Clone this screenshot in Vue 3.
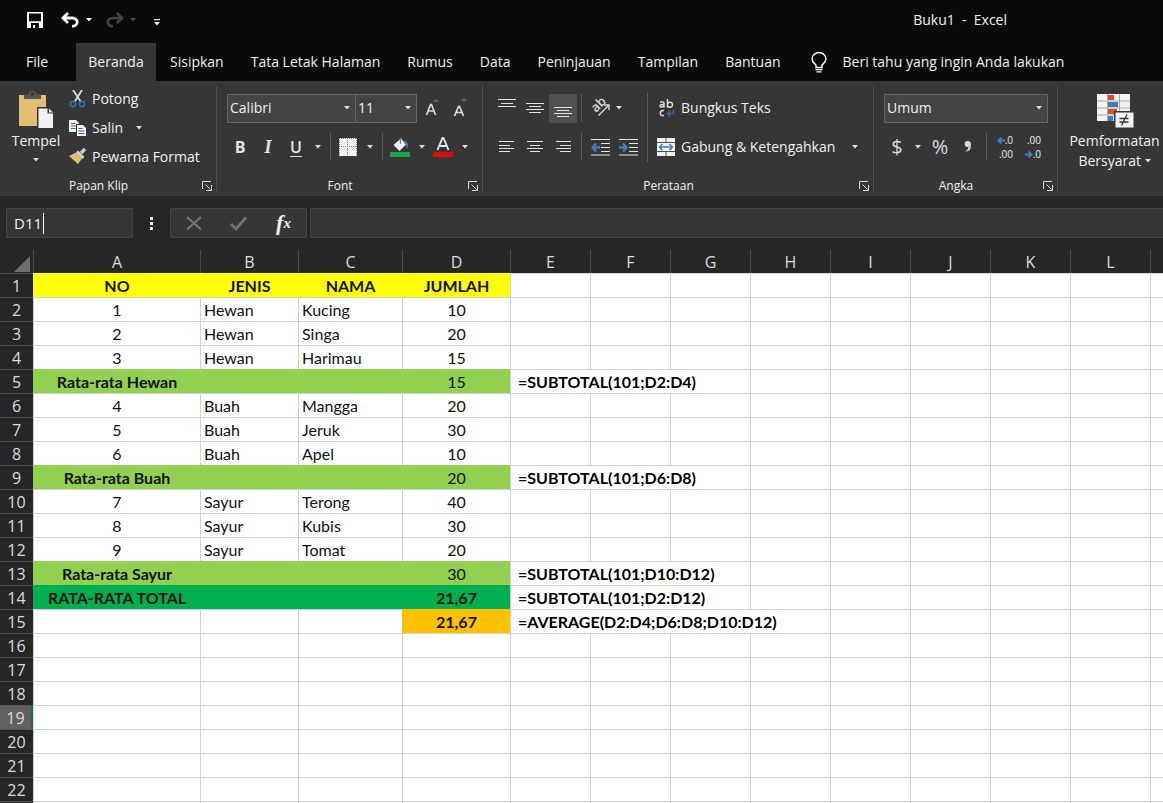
<script setup>
import { ref } from 'vue'

const nameBox = ref('D11')
const formula = ref('')
const fontName = ref('Calibri')
const fontSize = ref('11')
const numberFormat = ref('Umum')

const tabs = ['File', 'Beranda', 'Sisipkan', 'Tata Letak Halaman', 'Rumus', 'Data', 'Peninjauan', 'Tampilan', 'Bantuan']
const activeTab = ref('Beranda')

const columns = ['A', 'B', 'C', 'D', 'E', 'F', 'G', 'H', 'I', 'J', 'K', 'L', '']

const item = (no, jenis, nama, jumlah) => [
  { t: no, c: 'mid' },
  { t: jenis },
  { t: nama },
  { t: jumlah, c: 'mid' }
]
const total = (label, value, note, fill, extra = '') => [
  { t: label, c: `mid bold ${fill}` },
  { t: '', c: fill },
  { t: '', c: fill },
  { t: value, c: `mid ${fill} ${extra}` },
  { t: note, c: 'bold note', span: 3 }
]

const data = [
  ['NO', 'JENIS', 'NAMA', 'JUMLAH'].map((t) => ({ t, c: 'mid bold yellow' })),
  item('1', 'Hewan', 'Kucing', '10'),
  item('2', 'Hewan', 'Singa', '20'),
  item('3', 'Hewan', 'Harimau', '15'),
  total('Rata-rata Hewan', '15', '=SUBTOTAL(101;D2:D4)', 'lime'),
  item('4', 'Buah', 'Mangga', '20'),
  item('5', 'Buah', 'Jeruk', '30'),
  item('6', 'Buah', 'Apel', '10'),
  total('Rata-rata Buah', '20', '=SUBTOTAL(101;D6:D8)', 'lime'),
  item('7', 'Sayur', 'Terong', '40'),
  item('8', 'Sayur', 'Kubis', '30'),
  item('9', 'Sayur', 'Tomat', '20'),
  total('Rata-rata Sayur', '30', '=SUBTOTAL(101;D10:D12)', 'lime'),
  total('RATA-RATA TOTAL', '21,67', '=SUBTOTAL(101;D2:D12)', 'green', 'bold'),
  [
    { t: '' },
    { t: '' },
    { t: '' },
    { t: '21,67', c: 'mid bold orange' },
    { t: '=AVERAGE(D2:D4;D6:D8;D10:D12)', c: 'bold note', span: 4 }
  ]
]

const rows = Array.from({ length: 23 }, (_, i) => {
  const cells = [...(data[i] || [])]
  let used = cells.reduce((n, c) => n + (c.span || 1), 0)
  while (used < columns.length) {
    cells.push({ t: '' })
    used++
  }
  return { n: i + 1, label: i < 22 ? i + 1 : '', cells }
})
</script>

<template>
  <div class="app">
    <header class="titlebar">
      <div class="quick">
        <button class="q-save" aria-label="Simpan">
          <svg width="16" height="16" viewBox="0 0 16 16"><path d="M0 0h16v16H0zM2 1.6v7.6h12V1.6zM4 11v5h2v-3h2v3h4v-5z" fill="#fff" fill-rule="evenodd" /></svg>
        </button>
        <button class="q-undo" aria-label="Urungkan">
          <svg width="19" height="16" viewBox="0 0 19 16"><path d="M7 1 2 6l5 5M2.5 6H11c7 0 7 8 0 8.400" fill="none" stroke="#fff" stroke-width="2.800" /></svg>
        </button>
        <button class="arr" aria-label="Opsi urungkan"><svg width="6" height="4" viewBox="0 0 6 4"><path d="M0 0h6L3 3.500z" fill="#fff" /></svg></button>
        <button class="q-redo" aria-label="Ulangi">
          <svg width="19" height="16" viewBox="0 0 19 16"><path d="m12 1 5 5-5 5M16.500 6H8c-7 0-7 8 0 8.400" fill="none" stroke="#444" stroke-width="2.600" /></svg>
        </button>
        <button class="arr" aria-label="Opsi ulangi"><svg width="6" height="4" viewBox="0 0 6 4"><path d="M0 0h6L3 3.500z" fill="#4a4a4a" /></svg></button>
        <button class="q-more" aria-label="Kustomisasi"><svg width="6" height="7" viewBox="0 0 6 7"><path d="M0 0h6v1.200H0zM0 3h6L3 6.500z" fill="#e8e8e8" /></svg></button>
      </div>
      <h1>Buku1&nbsp; -&nbsp; Excel</h1>
    </header>

    <nav class="tabs">
      <button v-for="t in tabs" :key="t" :class="['tab', { active: t === activeTab, file: t === 'File' }]" @click="activeTab = t">{{ t }}</button>
      <button class="tell">
        <svg width="16" height="21" viewBox="0 0 16 21"><path d="M5 15.500v-2.500C3.500 11.500 1 10 1 7a7 6.500 0 0 1 14 0c0 3-2.500 4.500-4 6v2.500z" fill="none" stroke="#fff" stroke-width="1.400" /><path d="M4.500 17h7v1.200h-7zM5.500 19.300h5v1.200h-5z" fill="#fff" /></svg>
        Beri tahu yang ingin Anda lakukan
      </button>
    </nav>

    <section class="ribbon">
      <div class="group clip">
        <div class="body">
          <button class="paste">
            <svg width="36" height="39" viewBox="0 0 36 39">
              <path d="M1 5h27v31H1z" fill="#e2bd72" />
              <path d="M6 9V4.500h4.500c0-5 8-5 8 0H23V9z" fill="#555" /><circle cx="14.500" cy="4" r="1.700" fill="#363636" />
              <path d="M19 17h11l6 6v16H19z" fill="#363636" /><path d="M20.500 18.500h9v5h5.500V38H20.500z" fill="#f1f1f1" /><path d="m31 18.500 4 4h-4z" fill="#f1f1f1" />
            </svg>
            <span>Tempel</span>
            <svg class="a" width="6" height="4" viewBox="0 0 6 4"><path d="M0 0h6L3 3.500z" fill="#ddd" /></svg>
          </button>
          <div class="list">
            <button>
              <svg width="18" height="18" viewBox="0 0 18 18"><path d="m4 0 8 12M13 0 5.500 12" stroke="#d8d8d8" stroke-width="1.900" fill="none" /><circle cx="4" cy="14" r="2.600" fill="none" stroke="#3f6d99" stroke-width="1.600" /><circle cx="13" cy="14" r="2.600" fill="none" stroke="#3f6d99" stroke-width="1.600" /></svg>
              Potong
            </button>
            <button>
              <svg width="18" height="18" viewBox="0 0 18 18"><path d="M0 1h7l3 3v9H0z" fill="#f0f0f0" /><path d="M2 4.500h4M2 7h5M2 9.500h5" stroke="#3d6ea8" /><path d="M7 5h7l4 4v9H7z" fill="#363636" /><path d="M8 6h6l3 3v8H8z" fill="#f0f0f0" /><path d="M9.500 9.500h4M9.500 12h6M9.500 14.500h6" stroke="#3d6ea8" /></svg>
              Salin
              <svg class="gapleft" width="6" height="4" viewBox="0 0 6 4"><path d="M0 0h6L3 3.500z" fill="#ddd" /></svg>
            </button>
            <button>
              <svg width="18" height="18" viewBox="0 0 18 18"><path d="m0 8 7-3.500 6 6L9 16z" fill="#e2bd72" /><path d="m7 4.500 2-2 6.500 6.500-2 2z" fill="#d6d6d6" /><path d="m12 5 4-4" stroke="#c8c8c8" stroke-width="3.400" /></svg>
              Pewarna Format
            </button>
          </div>
        </div>
        <footer><span>Papan Klip</span><button aria-label="Opsi papan klip"><svg width="10" height="10" viewBox="0 0 10 10"><path d="M.5 8V.5H9M3.500 3.500l5 5M9.500 4v5.500H4" fill="none" stroke="#ddd" /></svg></button></footer>
      </div>

      <div class="group font">
        <div class="body col">
          <div class="row">
            <label class="sel w-font"><select v-model="fontName" aria-label="Font"><option>Calibri</option></select><svg width="6" height="4" viewBox="0 0 6 4"><path d="M0 0h6L3 3.500z" fill="#ddd" /></svg></label>
            <label class="sel w-size"><select v-model="fontSize" aria-label="Ukuran font"><option>11</option></select><svg width="6" height="4" viewBox="0 0 6 4"><path d="M0 0h6L3 3.500z" fill="#ddd" /></svg></label>
            <button class="b28 first" aria-label="Perbesar font"><svg width="16" height="18" viewBox="0 0 16 18"><path d="m1.500 16 4-10.500h1l4 10.500M3 12h6.500" fill="none" stroke="#dcdcdc" stroke-width="1.700" /><path d="M8 3h6l-3-3z" fill="#3f6d99" /></svg></button>
            <button class="b28" aria-label="Perkecil font"><svg width="16" height="18" viewBox="0 0 16 18"><path d="m1.500 17 4-9.500h1l4 9.500M3 13.500h6.500" fill="none" stroke="#dcdcdc" stroke-width="1.700" /><path d="M8 0h6l-3 3z" fill="#3f6d99" /></svg></button>
          </div>
          <div class="row">
            <button class="b26 glyph b">B</button>
            <button class="b30 glyph i">I</button>
            <button class="b26 glyph u">U</button>
            <button class="arr" aria-label="Opsi garis bawah"><svg width="6" height="4" viewBox="0 0 6 4"><path d="M0 0h6L3 3.500z" fill="#ddd" /></svg></button>
            <i class="sep"></i>
            <button class="b26" aria-label="Batas"><svg width="18" height="18" viewBox="0 0 18 18"><path d="M0 0h18v18H0z" fill="#f2f2f2" /><path d="M0 .5h18M0 8.500h18M.5 0v17M8.500 0v17M17.500 0v17" stroke="#777" stroke-dasharray="1 1" /></svg></button>
            <button class="arr" aria-label="Opsi batas"><svg width="6" height="4" viewBox="0 0 6 4"><path d="M0 0h6L3 3.500z" fill="#ddd" /></svg></button>
            <i class="sep"></i>
            <button class="b26" aria-label="Warna isian"><svg width="20" height="20" viewBox="0 0 20 20"><path d="m3.500 8 7.500-6.500 5 6L9.500 14z" fill="#f0f0f0" /><path d="M10.500 7V1" stroke="#888" stroke-width="1.300" /><path d="M14 3.500c4 1 5 4 3.500 8.500-1.500-2-.5-5-3.500-6z" fill="#3f78ad" /><path d="M0 15h20v5H0z" fill="#17a551" /></svg></button>
            <button class="arr" aria-label="Opsi warna isian"><svg width="6" height="4" viewBox="0 0 6 4"><path d="M0 0h6L3 3.500z" fill="#ddd" /></svg></button>
            <button class="b26" aria-label="Warna font"><svg width="20" height="20" viewBox="0 0 20 20"><path d="m4.500 13 5-12h1l5 12M6.500 9h7" fill="none" stroke="#e4e4e4" stroke-width="1.900" /><path d="M0 15h20v5H0z" fill="#e00b0b" /></svg></button>
            <button class="arr" aria-label="Opsi warna font"><svg width="6" height="4" viewBox="0 0 6 4"><path d="M0 0h6L3 3.500z" fill="#ddd" /></svg></button>
          </div>
        </div>
        <footer><span>Font</span><button aria-label="Opsi font"><svg width="10" height="10" viewBox="0 0 10 10"><path d="M.5 8V.5H9M3.500 3.500l5 5M9.500 4v5.500H4" fill="none" stroke="#ddd" /></svg></button></footer>
      </div>

      <div class="group align">
        <div class="body">
          <div class="col">
            <div class="row">
              <button class="b28" aria-label="Rata atas"><svg width="18" height="18" viewBox="0 0 18 18"><path d="M0 .5h18M3 4.500h12M0 7.500h18" stroke="#e4e4e4" /></svg></button>
              <button class="b28" aria-label="Rata tengah vertikal"><svg width="18" height="18" viewBox="0 0 18 18"><path d="M0 4.500h18M3 7.500h12M0 10.500h18M3 13.500h12" stroke="#e4e4e4" /></svg></button>
              <button class="b28 on" aria-label="Rata bawah"><svg width="18" height="18" viewBox="0 0 18 18"><path d="M0 8.500h18M3 11.500h12M0 14.500h18M3 17.500h12" stroke="#e4e4e4" /></svg></button>
              <i class="sep"></i>
              <button class="b28" aria-label="Orientasi"><svg width="20" height="20" viewBox="0 0 20 20"><text class="ab" x="0" y="0" transform="translate(6 15) rotate(-45)">ab</text><path d="m8.500 17.500 10-10M14 7h5v5" fill="none" stroke="#dcdcdc" stroke-width="1.400" /></svg></button>
              <button class="arr narrow" aria-label="Opsi orientasi"><svg width="6" height="4" viewBox="0 0 6 4"><path d="M0 0h6L3 3.500z" fill="#ddd" /></svg></button>
            </div>
            <div class="row">
              <button class="b28" aria-label="Rata kiri"><svg width="16" height="12" viewBox="0 0 16 12"><path d="M0 .5h15M0 4.500h11M0 7.500h15M0 10.500h11" stroke="#e4e4e4" /></svg></button>
              <button class="b28" aria-label="Rata tengah"><svg width="16" height="12" viewBox="0 0 16 12"><path d="M0 .5h16M3 4.500h10M0 7.500h16M3 10.500h10" stroke="#e4e4e4" /></svg></button>
              <button class="b28" aria-label="Rata kanan"><svg width="16" height="12" viewBox="0 0 16 12"><path d="M1 .5h15M5 4.500h11M1 7.500h15M5 10.500h11" stroke="#e4e4e4" /></svg></button>
              <i class="sep"></i>
              <button class="b28" aria-label="Kurangi inden"><svg width="19" height="17" viewBox="0 0 19 17"><path d="M0 .5h19M10 4.500h9M10 8.500h9M10 12.500h9M0 16h19" stroke="#e4e4e4" /><path d="M9 8.500H2M5 4.500 1.500 8.500l3.500 4" stroke="#3f7fc1" stroke-width="2.400" fill="none" /></svg></button>
              <button class="b28" aria-label="Tambah inden"><svg width="19" height="17" viewBox="0 0 19 17"><path d="M0 .5h19M10 4.500h9M10 8.500h9M10 12.500h9M0 16h19" stroke="#e4e4e4" /><path d="M0 8.500h7M4 4.500l3.500 4-3.500 4" stroke="#3f7fc1" stroke-width="2.400" fill="none" /></svg></button>
            </div>
          </div>
          <i class="sep tall"></i>
          <div class="col">
            <button class="row wide">
              <svg width="18" height="20" viewBox="0 0 18 20"><g fill="none" stroke="#dcdcdc" stroke-width="1.500"><path d="M3 4.300q4-1.500 4 1.200V9.500M7 6.500q-4-.3-4 1.300c0 1.800 3 1.500 4-.3M10.500 1v8.500M10.500 5.500c1.500-2 5-1.500 5 1.300S12 10 10.500 8M7 12.800c-5-1.500-5 6 0 4.800" /></g><path d="M16.500 12v3.500H11m2.500-3L10.500 15.500l3 3" fill="none" stroke="#3b679a" stroke-width="1.500" /></svg>
              Bungkus Teks
            </button>
            <button class="row wide">
              <svg width="18" height="18" viewBox="0 0 18 18"><path d="M0 0h18v18H0z" fill="#f0f0f0" /><path d="M0 4.500h18M0 13.500h18M9 0v4.500M9 13.500V18" stroke="#555" /><path d="M2.500 9h13M5.500 6l-3 3 3 3M12.500 6l3 3-3 3" fill="none" stroke="#3b7bc0" stroke-width="1.500" /></svg>
              Gabung &amp; Ketengahkan
              <svg class="gapleft" width="6" height="4" viewBox="0 0 6 4"><path d="M0 0h6L3 3.500z" fill="#ddd" /></svg>
            </button>
          </div>
        </div>
        <footer><span>Perataan</span><button aria-label="Opsi perataan"><svg width="10" height="10" viewBox="0 0 10 10"><path d="M.5 8V.5H9M3.500 3.500l5 5M9.500 4v5.500H4" fill="none" stroke="#ddd" /></svg></button></footer>
      </div>

      <div class="group number">
        <div class="body col">
          <div class="row">
            <label class="sel w-num"><select v-model="numberFormat" aria-label="Format angka"><option>Umum</option></select><svg width="6" height="4" viewBox="0 0 6 4"><path d="M0 0h6L3 3.500z" fill="#ddd" /></svg></label>
          </div>
          <div class="row">
            <button class="b26 glyph sym">$</button>
            <button class="arr" aria-label="Opsi mata uang"><svg width="6" height="4" viewBox="0 0 6 4"><path d="M0 0h6L3 3.500z" fill="#ddd" /></svg></button>
            <button class="b28 glyph sym">%</button>
            <button class="b28" aria-label="Gaya koma"><svg width="8" height="14" viewBox="0 0 8 14"><path d="M3.500 1a3 3 0 1 1-.3 6Q4.500 6.800 4.300 8q-.5 2-3.300 3.500 6 .5 6-6.500Q7 1 3.500 1z" fill="#dcdcdc" /><circle cx="3.700" cy="4" r="3" fill="#dcdcdc" /></svg></button>
            <i class="sep"></i>
            <button class="b28 dec" aria-label="Tambah desimal"><span><svg width="8" height="9" viewBox="0 0 8 9"><path d="M8 4.500H2M4.500 1.500l-3 3 3 3" stroke="#3f7fc1" stroke-width="2" fill="none" /></svg>.0</span><span>.00</span></button>
            <button class="b28 dec" aria-label="Kurangi desimal"><span>.00</span><span><svg width="8" height="9" viewBox="0 0 8 9"><path d="M0 4.500h6M3.500 1.500l3 3-3 3" stroke="#3f7fc1" stroke-width="2" fill="none" /></svg>.0</span></button>
          </div>
        </div>
        <footer><span>Angka</span><button aria-label="Opsi angka"><svg width="10" height="10" viewBox="0 0 10 10"><path d="M.5 8V.5H9M3.500 3.500l5 5M9.500 4v5.500H4" fill="none" stroke="#ddd" /></svg></button></footer>
      </div>

      <div class="group cond">
        <button>
          <svg width="38" height="36" viewBox="0 0 38 36">
            <path d="M1 1h33v27H1z" fill="#f2f2f2" />
            <path d="M11.500 1v27M23.500 1v27M1 8h33M1 15h33M1 22h33" stroke="#aaa" />
            <path d="M12 2h6v5h-6zM12 16h9v5h-9z" fill="#d2502d" /><path d="M12 9h10v5H12zM12 23h5v5h-5z" fill="#3b7bc0" />
            <path d="M18 18h20v17H18z" fill="#363636" /><path d="M19.500 19.500h18v15h-18z" fill="#f2f2f2" />
            <path d="M23.500 25.500h9M23.500 29h9M31 21.500l-5.500 11" stroke="#333" stroke-width="1.300" />
          </svg>
          <span>Pemformatan</span>
          <span>Bersyarat <svg width="6" height="4" viewBox="0 0 6 4"><path d="M0 0h6L3 3.500z" fill="#ddd" /></svg></span>
        </button>
      </div>
    </section>

    <section class="fbar">
      <div class="name"><input v-model="nameBox" aria-label="Kotak nama" /><i class="caret"></i></div>
      <svg class="dots" width="3" height="13" viewBox="0 0 3 13"><path d="M0 0h3v3H0zM0 5h3v3H0zM0 10h3v3H0z" fill="#f0f0f0" /></svg>
      <div class="fx">
        <button aria-label="Batal"><svg width="16" height="14" viewBox="0 0 16 14"><path d="m1 1 14 12.500M15 1 1 13.500" stroke="#777" stroke-width="2" /></svg></button>
        <button aria-label="Masukkan"><svg width="17" height="15" viewBox="0 0 17 15"><path d="m1 8 5 5L16 1.500" fill="none" stroke="#737373" stroke-width="2.800" /></svg></button>
        <button class="f" aria-label="Sisipkan fungsi">f<sub>x</sub></button>
      </div>
      <input v-model="formula" class="formula" aria-label="Bilah rumus" />
    </section>

    <main class="sheet">
      <table>
        <colgroup>
          <col class="c-head" /><col class="c-a" /><col class="c-b" /><col class="c-c" /><col class="c-d" />
          <col v-for="n in 8" :key="n" class="c-n" /><col />
        </colgroup>
        <thead>
          <tr>
            <th class="corner"><svg width="16" height="16" viewBox="0 0 16 16"><path d="M16 0v16H0z" fill="#6e6e6e" /></svg></th>
            <th v-for="c in columns" :key="c" scope="col">{{ c }}</th>
          </tr>
        </thead>
        <tbody>
          <tr v-for="r in rows" :key="r.n">
            <th scope="row" :class="{ current: r.n === 19 }">{{ r.label }}</th>
            <td v-for="(c, i) in r.cells" :key="i" :class="c.c" :colspan="c.span || 1">{{ c.t }}</td>
          </tr>
        </tbody>
      </table>
    </main>
  </div>
</template>

<style>
body { margin: 0; background: #0a0a0a; }
</style>

<style scoped>
* { box-sizing: border-box; }
.app {
  display: flex;
  flex-direction: column;
  height: 100vh;
  overflow: hidden;
  background: #0a0a0a;
  color: #f1f1f1;
  font: 14px/20px "Open Sans", "Noto Sans", sans-serif;
}
button, input, select { font: inherit; color: inherit; background: none; border: 0; padding: 0; margin: 0; }
button { display: flex; align-items: center; justify-content: center; white-space: nowrap; }
svg { flex: none; display: block; }

.titlebar { display: flex; align-items: center; height: 43px; flex: none; padding-right: 156px; }
.quick { display: flex; align-items: center; padding: 0 0 4px 27px; flex: 1; }
.quick button { height: 20px; }
.q-undo { margin-left: 18px; }
.q-redo { margin-left: 8px; }
.q-more { margin-left: 13px; padding-top: 5px; }
.arr { width: 17px; height: 28px; }
h1 { margin: 0; font: inherit; padding-bottom: 3px; }

.tabs { display: flex; height: 38px; flex: none; }
.tab { padding: 0 13px; margin-right: 1px; }
.tab.file { width: 76px; padding-right: 15px; margin-right: 0; }
.tab.active { background: #363636; width: 80px; padding: 0; }
.tell { gap: 16px; margin-left: 16px; }

.ribbon { display: flex; height: 115px; flex: none; background: #363636; overflow: hidden; }
.group { display: flex; flex-direction: column; position: relative; flex: none; }
.group:not(.cond)::after { content: ""; position: absolute; right: 0; top: 5px; bottom: 5px; width: 1px; background: #505050; }
.clip { width: 217px; }
.font { width: 266px; }
.align { width: 391px; }
.number { width: 184px; }
.cond { flex: 1; padding: 12px 0 0 8px; overflow: hidden; }
.cond button { flex-direction: column; }
.cond svg { margin-bottom: 2px; }
.cond span svg { display: inline-block; margin: 0 0 3px; }
.body { display: flex; flex: 1; }
.font .body, .align .body, .number .body { padding: 12px 0 0 10px; }
.col { display: flex; flex-direction: column; gap: 9px; }
.row { display: flex; align-items: center; height: 30px; }
.row.wide { justify-content: flex-start; gap: 6px; padding-left: 4px; }
.row.wide .gapleft { margin-left: 11px; }
.paste { width: 72px; flex-direction: column; justify-content: flex-start; padding-top: 9px; }
.paste span { margin-top: 2px; }
.paste .a { margin-top: 7px; }
.list { display: flex; flex-direction: column; padding-top: 3px; margin-left: -3px; }
.list button { height: 29px; gap: 5px; justify-content: flex-start; }
.list .gapleft { margin-left: 8px; }
.group footer { display: flex; height: 22px; padding-top: 2px; align-items: center; font-size: 12px; }
.group footer span { flex: 1; text-align: center; }
.group footer button { width: 20px; height: 20px; }

.sel { position: relative; display: block; height: 29px; }
.sel select { width: 100%; height: 29px; appearance: none; border: 1px solid #666; background: #434443; padding-left: 2px; border-radius: 0; }
.sel svg { position: absolute; right: 6px; top: 12px; pointer-events: none; }
.w-font { width: 129px; }
.w-size { width: 62px; margin-left: -1px; }
.w-num { width: 164px; }
.b26 { width: 26px; height: 28px; }
.b28 { width: 28px; height: 29px; }
.b30 { width: 30px; height: 28px; }
.first { margin-left: 2px; }
.on { background: #505050; }
.arr { flex: none; }
.row .arr { width: 17px; }
.row .arr.narrow { width: 10px; }
.number .row .arr { width: 16px; }
.sep { width: 1px; height: 28px; background: #5a5a5a; margin: 0 4px; flex: none; }
.sep.tall { height: 69px; margin: 0 5px; }
.glyph { font-size: 16px; color: #e4e4e4; }
.b { font-weight: 700; }
.i { font: italic 700 18px "Liberation Serif", serif; }
.u { font-weight: 600; text-decoration: underline; text-underline-offset: 3px; }
.sym { font-size: 20px; color: #dcdcdc; }
.ab { font: 600 13px "Open Sans", sans-serif; fill: #dcdcdc; }
.dec { flex-direction: column; align-items: flex-end; font-size: 10px; line-height: 14px; padding-right: 6px; }
.dec span { display: flex; align-items: center; }

.fbar { display: flex; align-items: center; height: 54px; flex: none; background: #262626; padding-left: 6px; }
.name { position: relative; width: 127px; height: 30px; background: #363636; border: 1px solid #444; }
.name input { width: 100%; height: 28px; padding-left: 7px; font-size: 15px; display: block; outline: 0; }
.caret { position: absolute; left: 36px; top: 4px; width: 1px; height: 21px; background: #fff; }
.dots { margin: 0 17px; }
.fx { display: flex; width: 137px; height: 30px; background: #363636; border: 1px solid #444; }
.fx button { flex: 1; }
.fx .f { font: italic 700 22px "Liberation Serif", serif; }
.fx sub { font-size: 15px; vertical-align: 0; }
.formula { flex: 1; min-width: 0; height: 30px; margin-left: 3px; background: #363636; border: 1px solid #444; border-right: 0; padding: 0 8px; }

.sheet { flex: 1; min-height: 0; overflow: hidden; background: #262626; }
table { width: 100%; table-layout: fixed; border-collapse: separate; border-spacing: 0; }
.c-head { width: 33px; }
.c-a { width: 167px; }
.c-b { width: 98px; }
.c-c { width: 104px; }
.c-d { width: 108px; }
.c-n { width: 80px; }
thead th { height: 23px; padding: 0; font-weight: 400; font-size: 16px; line-height: 22px; color: #dcdcdc; border-left: 1px solid #4c4c4c; background: #262626; }
thead .corner { border: 0; }
.corner svg { margin: 4px 0 0 14px; }
tbody th { height: 24px; padding: 2px 0 0; font-weight: 400; font-size: 16px; line-height: 21px; color: #dcdcdc; background: #262626; border-top: 1px solid #555; }
tbody th.current { background: #606060; border-right: 2px solid #1e7145; }
td { height: 24px; padding: 0 3px; background: #fff; color: #111; border-left: 1px solid #d0d0d0; border-top: 1px solid #d0d0d0; font: 16px/23px Lato, Carlito, sans-serif; white-space: nowrap; overflow: visible; }
.mid { text-align: center; }
.bold { font-weight: 700; }
.note { padding-left: 7px; color: #000; }
.yellow { background: #ff0; border-color: #ff0; }
.lime { background: #92d050; border-color: #92d050; }
.green { background: #00b050; border-color: #00b050; }
.orange { background: #ffc000; border-color: #ffc000; }
</style>
